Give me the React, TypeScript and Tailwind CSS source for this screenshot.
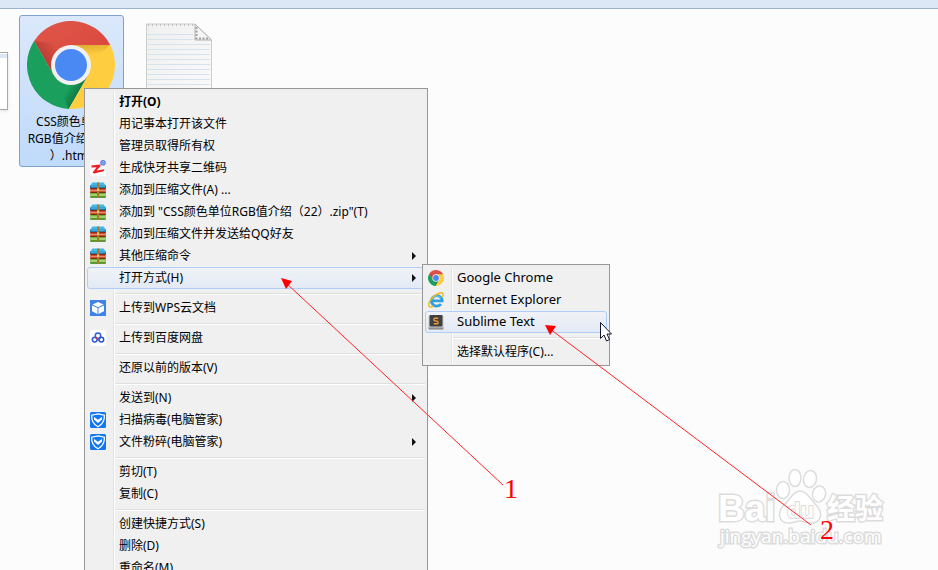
import type { ReactNode } from 'react'

type MenuEntry = {
  label: string
  icon?: ReactNode
  bold?: boolean
  arrow?: boolean
  active?: boolean
  wide?: boolean
}

function ChromeIcon({ className }: { className: string }) {
  return (
    <svg viewBox="0 0 88 88" className={className} aria-hidden="true">
      <defs>
        <linearGradient id="chrome-red" x1="0" y1="0" x2="1" y2="1">
          <stop offset="0" stopColor="#e0574a" />
          <stop offset="1" stopColor="#d8433a" />
        </linearGradient>
        <linearGradient id="chrome-red-shade" x1="14" y1="44" x2="34" y2="32" gradientUnits="userSpaceOnUse">
          <stop offset="0" stopColor="#9c3128" stopOpacity="0.7" />
          <stop offset="1" stopColor="#9c3128" stopOpacity="0" />
        </linearGradient>
        <linearGradient id="chrome-yellow-shade" x1="64" y1="24" x2="65" y2="34" gradientUnits="userSpaceOnUse">
          <stop offset="0" stopColor="#c58f20" stopOpacity="0.5" />
          <stop offset="1" stopColor="#c58f20" stopOpacity="0" />
        </linearGradient>
        <linearGradient id="chrome-green-shade" x1="52" y1="72" x2="42" y2="66" gradientUnits="userSpaceOnUse">
          <stop offset="0" stopColor="#0a5a34" stopOpacity="0.6" />
          <stop offset="1" stopColor="#0a5a34" stopOpacity="0" />
        </linearGradient>
      </defs>
      <path d="M7.1 20A44 44 0 0 1 83.2 24H44V44L26.7 54Z" fill="url(#chrome-red)" />
      <path d="M7.1 20L26.7 54L44 24Z" fill="url(#chrome-red-shade)" />
      <path d="M7.1 20A44 44 0 0 0 41.7 87.9L61.3 54L44 44L26.7 54Z" fill="#1a9f5c" />
      <path d="M41.7 87.9L61.3 54L27 54Z" fill="url(#chrome-green-shade)" />
      <path d="M83.2 24A44 44 0 0 1 41.7 87.9L61.3 54L44 44V24Z" fill="#ffcd40" />
      <path d="M44 24H83.2L62 42Z" fill="url(#chrome-yellow-shade)" />
      <circle cx="44" cy="44" r="20" fill="#f1f1f1" />
      <circle cx="44" cy="44" r="16" fill="#4a89f3" />
    </svg>
  )
}

function ZapyaIcon() {
  return (
    <svg viewBox="0 0 16 16" className="size-4" aria-hidden="true">
      <rect width="16" height="16" fill="#fbfbfb" />
      <path d="M1.4 5.6L10.6 4.4L10.2 6.4L6.6 10.4L14.4 9.2L13.6 11.2L4 13.6L2.6 12.4L6.6 7.2L1.6 7.6Z" fill="#ee1c25" />
      <circle cx="13" cy="2.8" r="2.8" fill="#5878e0" />
      <circle cx="13" cy="2.8" r="1.3" fill="none" stroke="#c3cffa" strokeWidth="0.7" />
    </svg>
  )
}

function ArchiveIcon() {
  return (
    <svg viewBox="0 0 16 16" className="size-4" aria-hidden="true">
      <path d="M2.4 0.5H13.6L16 4H0Z" fill="#3fb8ea" />
      <path d="M0 3.6H16V6H0Z" fill="#1c78ad" />
      <path d="M1 4.3H15" stroke="#74cdf0" strokeWidth="0.7" />
      <path d="M0.3 6H15.7V11H0.3Z" fill="#ce4a2c" />
      <path d="M0.3 6H15.7V7H0.3Z" fill="#8a2c1c" />
      <path d="M1 8.6H15" stroke="#eba389" strokeWidth="0.8" />
      <path d="M0.3 10H15.7V11H0.3Z" fill="#7a2a18" />
      <path d="M0.3 11H15.7V15.6H0.3Z" fill="#6fb02e" />
      <path d="M1 13H15" stroke="#d9efb0" strokeWidth="1" />
      <path d="M0.3 14.6H15.7V15.6H0.3Z" fill="#3c741c" />
      <path d="M7 0.5H9.2V15.6H7Z" fill="#a87b2a" />
      <path d="M7 6.4H9.2V9H7Z" fill="#ecc661" />
    </svg>
  )
}

function CubeIcon() {
  return (
    <svg viewBox="0 0 16 16" className="size-4" aria-hidden="true">
      <rect width="16" height="16" fill="#3f82e8" />
      <path d="M8 2L13.6 4.6L8 7.2L2.4 4.6Z" fill="#fff" />
      <path d="M2 5.6L7.5 8.1V14L2 11.3Z" fill="#fff" />
      <path d="M14 5.6L8.5 8.1V14L14 11.3Z" fill="#fff" />
    </svg>
  )
}

function NetdiskIcon() {
  return (
    <svg viewBox="0 0 16 16" className="size-4" aria-hidden="true">
      <rect width="16" height="16" rx="3" fill="#fff" />
      <g fill="none" strokeWidth="1.5">
        <circle cx="8" cy="5.8" r="2.7" stroke="#2a5fe0" />
        <circle cx="4.7" cy="9.6" r="2.4" stroke="#2a5fe0" />
        <circle cx="11.3" cy="9.6" r="2.4" stroke="#2456d8" />
      </g>
      <path d="M6 7.6L8.6 10.2" stroke="#e8323c" strokeWidth="1.6" />
      <path d="M8.4 9.8L10 8" stroke="#2a5fe0" strokeWidth="1.5" />
    </svg>
  )
}

function ShieldIcon() {
  return (
    <svg viewBox="0 0 16 16" className="size-4" aria-hidden="true">
      <rect width="16" height="16" rx="1.5" fill="#1277f2" />
      <path d="M8 1.8L14.4 3.2C14.6 8.6 12.4 12.4 8 14.8C3.6 12.4 1.4 8.6 1.6 3.2Z" fill="none" stroke="#fff" strokeWidth="1.3" />
      <path d="M4 5L8 7.8L12 5V7.4L8 11L4 7.4Z" fill="#fff" />
    </svg>
  )
}

function ExplorerIcon() {
  return (
    <svg viewBox="0 0 16 16" className="size-4" aria-hidden="true">
      <path d="M4 8.8H14.2A5.4 5.2 0 1 0 13 12.2" fill="none" stroke="#2f9fe0" strokeWidth="2.8" />
      <path d="M4 7.4A5 4.6 0 0 1 13 6" fill="none" stroke="#7fd0f5" strokeWidth="0.8" />
      <path d="M5.6 13.8C2.6 15.6 0.4 15.4 0.8 12.2C1.4 7.6 6.4 2.6 11.6 1C15.2 0 16 2 14.4 4.8" fill="none" stroke="#efb91f" strokeWidth="1.4" />
    </svg>
  )
}

function SublimeIcon() {
  return (
    <svg viewBox="0 0 16 16" className="size-4" aria-hidden="true">
      <rect x="0.5" y="1" width="15" height="14.5" rx="1.5" fill="#c9c9c9" />
      <path d="M0.5 13.5H15.5V14.5Q15.5 15.5 14.5 15.5H1.5Q0.5 15.5 0.5 14.5Z" fill="#8d8d8d" />
      <rect x="1.5" y="1" width="13" height="11.5" rx="1" fill="#414141" />
      <path d="M10.2 4.3H6.8C5.6 4.3 5.6 6.7 6.8 6.8L9.2 7.1C10.4 7.3 10.4 9.7 9.2 9.7H5.8" fill="none" stroke="#f09a35" strokeWidth="1.4" />
    </svg>
  )
}

const archive = <ArchiveIcon />
const shield = <ShieldIcon />

const groups: MenuEntry[][] = [
  [
    { label: '打开(O)', bold: true },
    { label: '用记事本打开该文件' },
    { label: '管理员取得所有权' },
    { label: '生成快牙共享二维码', icon: <ZapyaIcon /> },
    { label: '添加到压缩文件(A) ...', icon: archive },
    { label: '添加到 "CSS颜色单位RGB值介绍（22）.zip"(T)', icon: archive },
    { label: '添加到压缩文件并发送给QQ好友', icon: archive },
    { label: '其他压缩命令', icon: archive, arrow: true },
    { label: '打开方式(H)', arrow: true, active: true },
  ],
  [{ label: '上传到WPS云文档', icon: <CubeIcon /> }],
  [{ label: '上传到百度网盘', icon: <NetdiskIcon /> }],
  [{ label: '还原以前的版本(V)' }],
  [
    { label: '发送到(N)', arrow: true },
    { label: '扫描病毒(电脑管家)', icon: shield },
    { label: '文件粉碎(电脑管家)', icon: shield, arrow: true },
  ],
  [{ label: '剪切(T)' }, { label: '复制(C)' }],
  [{ label: '创建快捷方式(S)' }, { label: '删除(D)' }, { label: '重命名(M)' }],
]

const openWith: MenuEntry[][] = [
  [
    { label: 'Google Chrome', icon: <ChromeIcon className="size-4" />, wide: true },
    { label: 'Internet Explorer', icon: <ExplorerIcon />, wide: true },
    { label: 'Sublime Text', icon: <SublimeIcon />, wide: true, active: true },
  ],
  [{ label: '选择默认程序(C)...' }],
]

function MenuItem({ label, icon, bold, arrow, active, wide }: MenuEntry) {
  return (
    <button
      type="button"
      role="menuitem"
      className={`relative flex h-[22px] w-full items-center rounded-[3px] border pl-[2px] pr-2 text-left ${
        active ? 'border-[#aecff7] bg-linear-to-b from-[#f0f2f6] to-[#e3eaf5]' : 'border-transparent'
      }`}
    >
      <span className="mr-[13px] flex size-4 shrink-0">{icon}</span>
      <span className={`flex-1 whitespace-nowrap ${bold ? 'font-bold' : ''} ${wide ? 'text-[13px]' : 'text-xs'}`}>{label}</span>
      {arrow && (
        <svg viewBox="0 0 4 8" className="h-2 w-1" aria-hidden="true">
          <path d="M0 0L4 4L0 8Z" fill="#111" />
        </svg>
      )}
    </button>
  )
}

function Menu({ entries, label, className }: { entries: MenuEntry[][]; label: string; className: string }) {
  return (
    <div role="menu" aria-label={label} className={`absolute border border-[#979797] bg-[#f0f0f0] p-[2px] ${className}`}>
      <div className="absolute inset-y-[2px] left-7 w-[2px] border-l border-[#e2e3e3] bg-white" />
      {entries.map((group, i) => (
        <div key={i}>
          {i > 0 && (
            <div className="pb-[2px] pl-[28px] pt-[4px]">
              <div className="h-[2px] border-t border-[#dfdfdf] bg-white" />
            </div>
          )}
          {group.map((entry) => (
            <MenuItem key={entry.label} {...entry} />
          ))}
        </div>
      ))}
    </div>
  )
}

function TextFileIcon() {
  return (
    <svg viewBox="0 0 68 88" className="h-[88px] w-[68px]" aria-label="文本文件">
      <defs>
        <linearGradient id="paper" x1="0" y1="0" x2="1" y2="1">
          <stop offset="0" stopColor="#efefef" />
          <stop offset="1" stopColor="#fbfbfb" />
        </linearGradient>
      </defs>
      <path d="M1.5 2H50L66.5 18V88H1.5Z" fill="url(#paper)" stroke="#cccccc" />
      <path d="M3 3H48" stroke="#c0c0c0" strokeWidth="2" strokeDasharray="1 3" />
      {[12, 17, 22, 27, 32, 37, 42, 47, 52, 57, 62].map((y) => (
        <path key={y} d={`M2 ${y + 0.5}H${y < 18 ? 48 : 65}`} stroke="#d5e3ed" />
      ))}
      <path d="M50 2V18H66.5Z" fill="#f6f6f6" stroke="#b0b0b0" />
      <path d="M51.5 5V16.5H63" fill="none" stroke="#a0a0a0" strokeWidth="2" strokeDasharray="2 1.5" />
    </svg>
  )
}

function Watermark() {
  return (
    <svg viewBox="0 0 180 90" className="absolute left-[714px] top-[465px] h-[90px] w-[180px]" aria-hidden="true">
      <g fill="#fff" stroke="#dcdcdc" strokeWidth="1.5">
        <text x="4" y="56" fontFamily="Liberation Sans, sans-serif" fontWeight="700" fontSize="37" strokeWidth="3" paintOrder="stroke">Bai</text>
        <ellipse cx="69" cy="25" rx="6.5" ry="8.5" />
        <ellipse cx="81" cy="13" rx="6" ry="8.5" />
        <ellipse cx="96" cy="14" rx="6.5" ry="8.5" transform="rotate(12 96 14)" />
        <ellipse cx="105" cy="29" rx="6.5" ry="8" transform="rotate(15 105 29)" />
        <path d="M86 26C93 26 96 34 102 40C110 48 107 58 97 58C91 58 90 56 86 56C81 56 80 58 75 58C64 58 63 47 70 40C76 35 79 26 86 26Z" />
        <text x="73" y="53" fontFamily="Liberation Sans, sans-serif" fontWeight="700" fontSize="22" strokeWidth="2" paintOrder="stroke">du</text>
        <text x="113" y="54" fontFamily="Noto Sans CJK SC, sans-serif" fontWeight="700" fontSize="28" strokeWidth="3" paintOrder="stroke">经验</text>
        <text x="6" y="78" fontFamily="Open Sans, sans-serif" fontSize="19" strokeWidth="3" paintOrder="stroke">jingyan.baidu.com</text>
      </g>
    </svg>
  )
}

function Annotations() {
  return (
    <svg className="pointer-events-none absolute inset-0 size-full" aria-hidden="true">
      <g stroke="#f22" strokeWidth="1">
        <path d="M285 282L503 485" />
        <path d="M550 329L811 525" />
      </g>
      <path d="M281 278L292 281L286 289Z" fill="#f00" />
      <path d="M545 325L556 326L550 335Z" fill="#f00" />
      <g fill="#f00" fontFamily="Liberation Serif, serif" fontSize="28">
        <text x="504" y="498">1</text>
        <text x="820" y="539">2</text>
      </g>
      <path d="M600.5 322.5V338.5L604 335L606.5 341L609.5 339.5L607 334H611.5Z" fill="#fff" stroke="#15152c" />
    </svg>
  )
}

export default function App() {
  return (
    <main className="relative h-screen overflow-hidden bg-[#fcfcfc] font-['Noto_Sans','Noto_Sans_CJK_SC',sans-serif] text-xs text-black">
      <div className="h-[9px] border-b border-[#9db2cd] bg-[#dde8f6]" />
      <div className="flex items-start">
        <div className="mt-[43px] h-[58px] w-2 border border-l-0 border-[#a9a9a9] bg-white pt-px shadow-sm">
          <div className="h-1 bg-[#dce7f5]" />
        </div>
        <a
          href="#file"
          className="ml-[11px] mt-[6px] flex h-[152px] w-[105px] flex-col items-center rounded-[3px] border border-[#7da2ce] bg-linear-to-b from-[#dbe8fa] to-[#bfdafb] pr-[2px] pt-[5px]"
        >
          <ChromeIcon className="size-[88px]" />
          <span className="mt-1 text-center leading-[17px] whitespace-nowrap">
            CSS颜色单位
            <br />
            RGB值介绍（22
            <br />
            ）.html
          </span>
        </a>
        <div className="ml-[21px] mt-[13px]">
          <TextFileIcon />
        </div>
      </div>
      <Watermark />
      <Menu entries={groups} label="文件" className="left-[84px] top-[88px] w-[344px]" />
      <Menu entries={openWith} label="打开方式" className="left-[422px] top-[264px] w-[188px]" />
      <Annotations />
    </main>
  )
}
